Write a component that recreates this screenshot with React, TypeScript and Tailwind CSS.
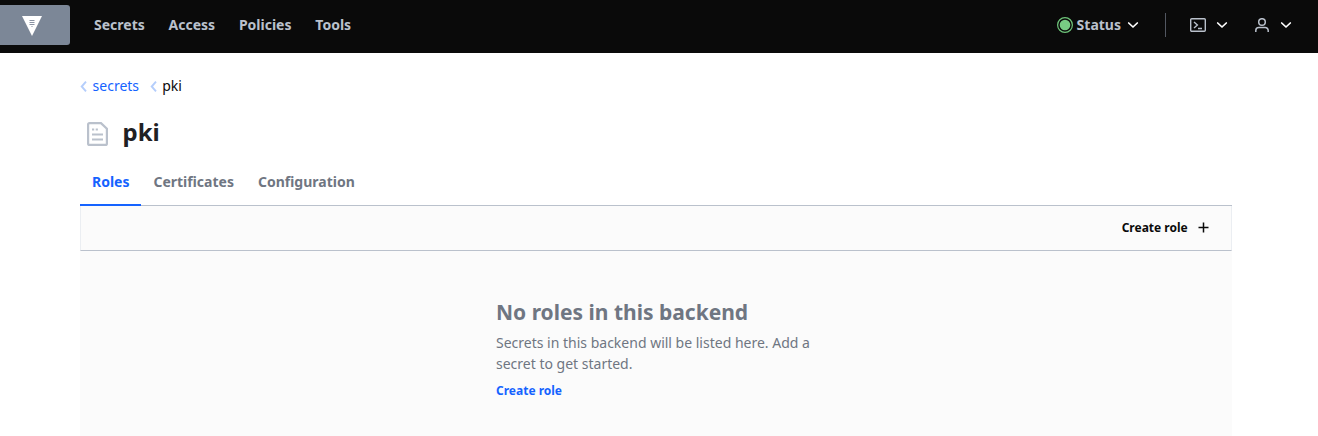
import React from "react";

const Chevron = () => (
  <svg width="12" height="8" viewBox="0 0 12 8" fill="none" stroke="#fff" strokeWidth="1.7" strokeLinecap="round" strokeLinejoin="round">
    <path d="M1.700 2 6 6l4.300-4" />
  </svg>
);

const BackChevron = () => (
  <svg className="mt-[3px]" width="7" height="11" viewBox="0 0 7 11" fill="none" stroke="#b5cefc" strokeWidth="1.9">
    <path d="M6 .6 1.700 5.500 6 10.400" />
  </svg>
);

const Logo = () => (
  <svg width="20" height="20" viewBox="0 0 20 20">
    <path d="M0 0h20L10 20z" fill="#fff" />
    <g stroke="#8a93a3" strokeWidth="1">
      <path d="M7.500 4.500h5M7.500 6.500h5M7.500 8.500h5" />
      <path d="M9 10.500h2" stroke="#c5cad2" />
    </g>
  </svg>
);

const Header = () => (
  <header className="flex h-[53px] items-start bg-[#0a0a0a] pt-[5px] text-[14px] font-bold text-[#bac1cc]">
    <div className="flex h-10 w-[70px] justify-center rounded-r-[3px] bg-[#7c8797] pr-[6px] pt-[11px]">
      <Logo />
    </div>
    <nav className="ml-6 flex h-[38px] items-center gap-[23.800px]">
      <a>Secrets</a>
      <a>Access</a>
      <a>Policies</a>
      <a>Tools</a>
    </nav>
    <div className="ml-auto flex h-10 items-center pr-[26px]">
      <svg width="16" height="16" viewBox="0 0 16 16">
        <circle cx="8" cy="8" r="7.400" fill="none" stroke="#6fc67b" strokeWidth="1.200" />
        <circle cx="8" cy="8" r="5.300" fill="#78cb83" />
      </svg>
      <span className="ml-1 mr-1.5 pb-0.5">Status</span>
      <Chevron />
      <span className="ml-[26px] mr-6 h-6 w-px bg-[#525761]" />
      <svg width="16" height="14" viewBox="0 0 16 14" fill="none" stroke="#bac1cc" strokeWidth="1.400">
        <rect x=".7" y=".7" width="14.600" height="12.600" rx="1" />
        <path d="m4 4 3.400 3L4 10M8 10.500h4" />
      </svg>
      <span className="ml-[10px] mr-[27px] flex"><Chevron /></span>
      <svg width="14" height="14" viewBox="0 0 14 14" fill="none" stroke="#bac1cc" strokeWidth="1.500">
        <circle cx="7" cy="4" r="3.300" />
        <path d="M.8 14v-1.500a3 3 0 0 1 3-3h6.400a3 3 0 0 1 3 3V14" />
      </svg>
      <span className="ml-[11px] flex"><Chevron /></span>
    </div>
  </header>
);

export default function App() {
  return (
    <div className="flex h-[436px] flex-col overflow-hidden bg-white font-['Noto_Sans',sans-serif]">
      <Header />
      <main className="ml-20 mr-[86px] flex flex-1 flex-col">
        <nav className="mt-[21px] flex h-[22px] items-center text-[14px]">
          <BackChevron />
          <a className="ml-[5.600px] mr-[10.500px] text-[#1563ff]">secrets</a>
          <BackChevron />
          <span className="ml-[5.600px] text-[#0a0a0a]">pki</span>
        </nav>
        <div className="mt-[18px] flex h-9 items-center">
          <svg className="ml-[7px] mt-[4px]" width="21" height="24" viewBox="0 0 21 24" fill="none" stroke="#bac1cc" strokeWidth="2.200">
            <path d="M2.600 1.100H14l5.900 5.700v14.600a1.500 1.500 0 0 1-1.500 1.500H2.600a1.500 1.500 0 0 1-1.500-1.500V2.600a1.500 1.500 0 0 1 1.500-1.500z" />
            <path d="M5 7.500h2.200M8.700 7.500h2.200M5 12.500h11M5 17.500h11" strokeWidth="2" />
          </svg>
          <h1 className="ml-[14.500px] text-[24px] font-bold leading-9 text-[#1f2124]">pki</h1>
        </div>
        <div className="mt-[7px] flex h-[49px] shrink-0 border-b border-[#bac1cc] text-[14px] font-bold text-[#6f7682]">
          <a className="-mb-px h-[49px] w-[61.400px] border-b-2 border-[#1563ff] pl-3 pt-[14px] text-[#1563ff]">Roles</a>
          <a className="px-3 pt-[14px]">Certificates</a>
          <a className="px-3 pt-[14px]">Configuration</a>
        </div>
        <div className="flex h-[45px] shrink-0 items-center justify-end border-x border-b border-x-[#ebeef2] border-b-[#bac1cc] bg-[#fbfbfb] pr-[22.300px] text-[12px] font-bold text-[#0a0a0a]">
          <span>Create role</span>
          <svg className="-mt-px ml-[10px]" width="11" height="11" viewBox="0 0 11 11" stroke="#0a0a0a" strokeWidth="1.500">
            <path d="M5.500.5v10M.5 5.500h10" />
          </svg>
        </div>
        <section className="flex flex-1 justify-center bg-[#fbfbfb] pt-[46px]">
          <div className="w-[320px] text-[#6f7682]">
            <h2 className="text-[21px] font-bold leading-[30px]">No roles in this backend</h2>
            <p className="mt-[5px] text-[14px] leading-[21px]">Secrets in this backend will be listed here. Add a secret to get started.</p>
            <a className="mt-2 block text-[12px] font-bold leading-[18px] text-[#1563ff]">Create role</a>
          </div>
        </section>
      </main>
    </div>
  );
}
